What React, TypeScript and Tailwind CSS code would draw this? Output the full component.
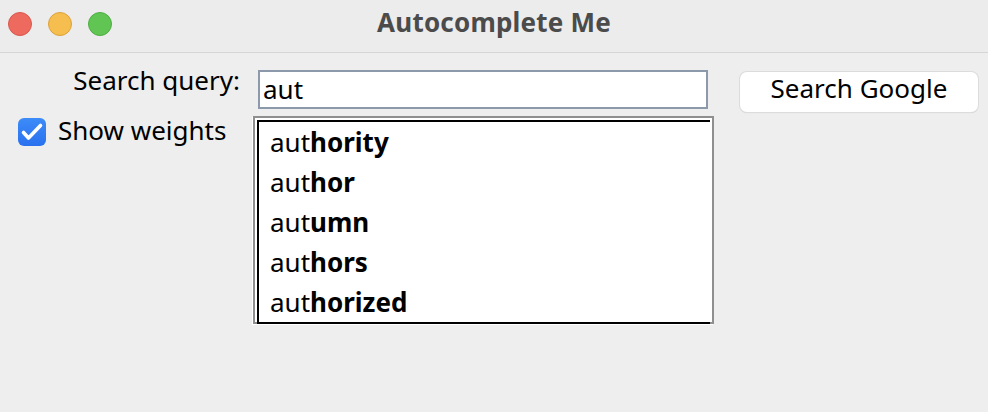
import { useState } from "react";

const words = [
    { typed: "aut", rest: "hority" },
    { typed: "aut", rest: "hor" },
    { typed: "aut", rest: "umn" },
    { typed: "aut", rest: "hors" },
    { typed: "aut", rest: "horized" },
];

export default function App() {
    const [query] = useState("aut");
    const [showWeights, setShowWeights] = useState(true);

    return (
        <div className="w-[988px] h-[412px] bg-[#eeeeee] text-black overflow-hidden" style={{ fontFamily: '"Noto Sans", "DejaVu Sans", sans-serif' }}>
            {/* title bar */}
            <div className="relative h-[53px] bg-[#ececec] border-b border-[#d6d6d6] flex items-start justify-center">
                <div className="absolute left-[8px] top-[12px] flex gap-[16px]">
                    <span className="w-[24px] h-[24px] rounded-full bg-[#ee6a5f] border border-[#d8584d]" />
                    <span className="w-[24px] h-[24px] rounded-full bg-[#f5be4f] border border-[#dca23b]" />
                    <span className="w-[24px] h-[24px] rounded-full bg-[#61c554] border border-[#4ead43]" />
                </div>
                <h1 className="text-[26px] leading-[44px] font-bold text-[#4b4b4b] tracking-[0.2px]">Autocomplete Me</h1>
            </div>

            {/* search row */}
            <div className="flex items-start mt-[7px]">
                <div className="w-[240px] text-right text-[26px] leading-[40px]">Search query:</div>
                <div className="ml-[18px] mt-[10px] w-[450px] h-[39px] bg-white border-2 border-[#8c99ab] pl-[3px] text-[26px] leading-[34px]">
                    {query}
                </div>
                <button className="ml-[32px] mt-[12px] w-[238px] h-[40px] bg-white rounded-[7px] shadow-[0_0_0_1px_#dcdcdc,0_1px_1px_rgba(0,0,0,0.15)] text-[26px] leading-[33px] flex items-start justify-center">
                    Search Google
                </button>
            </div>

            {/* weights + suggestions */}
            <div className="flex items-start mt-[4px]">
                <label className="w-[253px] pl-[18px] flex items-start cursor-default" onClick={() => setShowWeights(!showWeights)}>
                    <span className="mt-[2px] w-[28px] h-[28px] rounded-[6px] bg-gradient-to-b from-[#3d8bf8] to-[#2a71ef] flex items-center justify-center">
                        {showWeights && (
                            <svg width="28" height="28" viewBox="0 0 28 28" fill="none">
                                <path d="M5.5 14.5 L10.5 20 L22.5 7.5" stroke="white" strokeWidth="3.6" strokeLinecap="round" strokeLinejoin="round" />
                            </svg>
                        )}
                    </span>
                    <span className="ml-[12px] text-[26px] leading-[28px]">Show weights</span>
                </label>
                <div className="w-[461px] h-[208px] border-2 border-[#8f8f8f] bg-white pt-[2px] pl-[2px] pr-[2px] shadow-[-1px_1px_0_#ffffff]">
                    <div className="h-[204px] border-t-2 border-l-2 border-b-2 border-black overflow-hidden">
                        <ul className="h-[200px] overflow-hidden pl-[11px]">
                            {words.map((w, i) => (
                                <li key={i} className="h-[40px] text-[26px] leading-[40px] whitespace-nowrap">
                                    {w.typed}<span className="font-bold">{w.rest}</span>
                                </li>
                            ))}
                        </ul>
                    </div>
                </div>
            </div>
        </div>
    );
}
